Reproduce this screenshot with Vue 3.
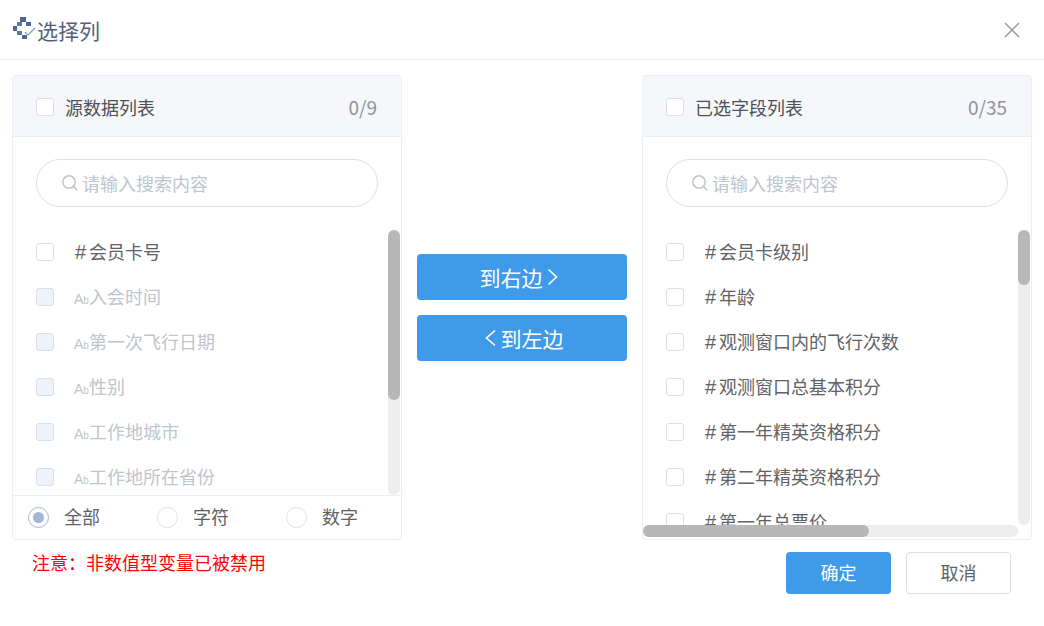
<script setup>
const leftItems = [
  { type: '#', label: '会员卡号', disabled: false },
  { type: 'Ab', label: '入会时间', disabled: true },
  { type: 'Ab', label: '第一次飞行日期', disabled: true },
  { type: 'Ab', label: '性别', disabled: true },
  { type: 'Ab', label: '工作地城市', disabled: true },
  { type: 'Ab', label: '工作地所在省份', disabled: true },
]
const rightItems = ['会员卡级别', '年龄', '观测窗口内的飞行次数', '观测窗口总基本积分', '第一年精英资格积分', '第二年精英资格积分', '第一年总票价']
const radios = ['全部', '字符', '数字']
</script>

<template>
  <div class="dialog">
    <header class="head">
      <div class="title">
        <svg class="logo" width="24" height="23" viewBox="0 0 24 23">
          <g fill="#4f6596">
            <rect x="7" y="0" width="6" height="5" />
            <rect x="13" y="5" width="5" height="4" />
            <rect x="4" y="5" width="5" height="4" fill="#5f76a6" />
            <rect x="0" y="9" width="4" height="5" />
            <rect x="4" y="14" width="5" height="4" fill="#5f76a6" />
            <rect x="9" y="18" width="5" height="4" />
          </g>
          <path d="M12 15l3 3 7-7" fill="none" stroke="#8295b8" stroke-width="1.1" />
        </svg>
        <span>选择列</span>
      </div>
      <svg class="close" width="18" height="18" viewBox="0 0 18 18">
        <path d="M2 2l14 14M16 2L2 16" fill="none" stroke="#8f959e" stroke-width="1.4" />
      </svg>
    </header>

    <main class="body">
      <div class="left-col">
        <section class="panel">
          <div class="panel-head">
            <label class="head-label"><i class="check"></i><span>源数据列表</span></label>
            <span class="count">0/9</span>
          </div>
          <div class="panel-body left-body">
            <div class="search">
              <svg width="18" height="18" viewBox="0 0 18 18"><circle cx="8" cy="8" r="6.2" fill="none" stroke="#c0c4cc" stroke-width="1.5" /><path d="M12.6 12.6l3.6 3.6" stroke="#c0c4cc" stroke-width="1.5" /></svg>
              <span>请输入搜索内容</span>
            </div>
            <ul class="list">
              <li v-for="it in leftItems" :key="it.label" class="row" :class="{ off: it.disabled }">
                <i class="check"></i>
                <span class="label">
                  <span v-if="it.type === '#'" class="hash">#</span>
                  <span v-else class="ab">A<small>b</small></span>{{ it.label }}
                </span>
              </li>
            </ul>
            <div class="vbar"><div class="vthumb left-thumb"></div></div>
          </div>
          <div class="radios">
            <label v-for="(r, i) in radios" :key="r" class="radio">
              <i class="dot" :class="{ on: i === 0 }"></i><span>{{ r }}</span>
            </label>
          </div>
        </section>
        <p class="note">注意：非数值型变量已被禁用</p>
      </div>

      <div class="mid">
        <button class="move">到右边<svg width="16" height="18" viewBox="0 0 16 18"><path d="M1.5 1.500l8 7.500-8 7.500" fill="none" stroke="#fff" stroke-width="1.6" /></svg></button>
        <button class="move"><svg width="16" height="18" viewBox="0 0 16 18"><path d="M14 1.500L5.500 9l8.500 7.500" fill="none" stroke="#fff" stroke-width="1.6" /></svg>到左边</button>
      </div>

      <div class="right-col">
        <section class="panel">
          <div class="panel-head">
            <label class="head-label"><i class="check"></i><span>已选字段列表</span></label>
            <span class="count">0/35</span>
          </div>
          <div class="panel-body right-body">
            <div class="search">
              <svg width="18" height="18" viewBox="0 0 18 18"><circle cx="8" cy="8" r="6.2" fill="none" stroke="#c0c4cc" stroke-width="1.5" /><path d="M12.6 12.6l3.6 3.6" stroke="#c0c4cc" stroke-width="1.5" /></svg>
              <span>请输入搜索内容</span>
            </div>
            <ul class="list">
              <li v-for="it in rightItems" :key="it" class="row">
                <i class="check"></i>
                <span class="label"><span class="hash">#</span>{{ it }}</span>
              </li>
            </ul>
            <div class="vbar right-vbar"><div class="vthumb right-thumb"></div></div>
            <div class="hbar"><div class="hthumb"></div></div>
          </div>
        </section>
        <div class="actions">
          <button class="ok"><span>确定</span></button>
          <button class="cancel"><span>取消</span></button>
        </div>
      </div>
    </main>
  </div>
</template>

<style>
html, body { margin: 0; background: #fff; }
</style>

<style scoped>
.dialog {
  width: 1044px;
  height: 626px;
  overflow: hidden;
  background: #fff;
  font-family: "Noto Sans CJK SC", "Liberation Sans", sans-serif;
  color: #606266;
}
.head {
  height: 59px;
  border-bottom: 1px solid #ebeef5;
  display: flex;
  align-items: center;
  justify-content: space-between;
  padding: 0 23px 0 13px;
}
.title {
  display: flex;
  align-items: center;
  font-size: 21px;
  color: #53607a;
}
.logo { width: 24px; height: 23px; margin-top: -3px; }
.body {
  display: flex;
  padding: 15px 12px 0;
}
.left-col, .right-col { width: 390px; }
.panel {
  box-sizing: border-box;
  width: 390px;
  height: 465px;
  border: 1px solid #ebeef5;
  border-radius: 4px;
  overflow: hidden;
  display: flex;
  flex-direction: column;
}
.panel-head {
  flex: none;
  box-sizing: border-box;
  height: 61px;
  padding: 2px 24px 0 23px;
  background: #f5f7fa;
  border-bottom: 1px solid #ebeef5;
  display: flex;
  align-items: center;
  justify-content: space-between;
}
.head-label {
  display: flex;
  align-items: center;
  font-size: 18px;
  color: #4f5157;
}
.head-label .check { margin-right: 11px; }
.count { font-size: 19px; color: #909399; margin-top: -2px; }
.check {
  flex: none;
  box-sizing: border-box;
  display: block;
  width: 18px;
  height: 18px;
  border: 1px solid #dcdfe6;
  border-radius: 3px;
  background: #fff;
}
.panel-body {
  position: relative;
  overflow: hidden;
  flex: 1;
  min-height: 0;
}
.search {
  box-sizing: border-box;
  height: 48px;
  margin: 22px 23px 0;
  padding-left: 24px;
  border: 1px solid #dcdfe6;
  border-radius: 24px;
  display: flex;
  align-items: center;
  gap: 3px;
  font-size: 18px;
  color: #c0c4cc;
}
.list {
  list-style: none;
  margin: 22px 0 0;
  padding: 0;
}
.row {
  height: 45px;
  display: flex;
  align-items: center;
  padding-left: 23px;
  font-size: 18px;
  color: #606266;
}
.row .label { margin: -2px 0 0 20px; white-space: nowrap; }
.hash {
  display: inline-block;
  width: 15px;
  padding-right: 3px;
  box-sizing: border-box;
  text-align: right;
  font-family: "Liberation Sans", sans-serif;
  font-size: 20px;
}
.ab {
  display: inline-block;
  width: 15px;
  font-family: "Liberation Sans", sans-serif;
  font-size: 14px;
  color: #c0c4cc;
}
.ab small { font-size: 10px; }
.row.off { color: #c0c4cc; }
.row.off .check { background: #edf2fc; }
.vbar {
  position: absolute;
  top: 93px;
  right: 1px;
  bottom: 0;
  width: 12px;
  border-radius: 6px;
  background: #ededed;
}
.right-vbar { bottom: 14px; }
.vthumb {
  width: 12px;
  border-radius: 6px;
  background: #b7b7b7;
}
.left-thumb { height: 170px; }
.right-thumb { height: 55px; }
.hbar {
  position: absolute;
  left: 0;
  right: 13px;
  bottom: 2px;
  height: 12px;
  border-radius: 6px;
  background: #ededed;
}
.hthumb {
  width: 226px;
  height: 12px;
  border-radius: 6px;
  background: #b7b7b7;
}
.radios {
  flex: none;
  box-sizing: border-box;
  height: 44px;
  border-top: 1px solid #ebeef5;
  display: flex;
  align-items: center;
  padding-left: 15px;
}
.radio {
  flex: none;
  width: 129px;
  display: flex;
  align-items: center;
  font-size: 18px;
  color: #606266;
}
.radio span { margin-top: -3px; }
.dot {
  flex: none;
  box-sizing: border-box;
  width: 21px;
  height: 21px;
  border: 1px solid #dcdfe6;
  border-radius: 50%;
  margin-right: 15px;
  background: #fff;
  position: relative;
}
.dot.on { border-color: #a5b4d6; }
.dot.on::after {
  content: "";
  position: absolute;
  left: 4px;
  top: 4px;
  width: 11px;
  height: 11px;
  border-radius: 50%;
  background: #a5b4d6;
}
.note {
  margin: 9px 0 0 20px;
  font-size: 18px;
  line-height: 26px;
  color: #ff0000;
}
.mid {
  width: 240px;
  flex: none;
  display: flex;
  flex-direction: column;
  align-items: center;
  gap: 15px;
  padding-top: 179px;
}
.move {
  width: 210px;
  height: 46px;
  border: 0;
  border-radius: 4px;
  background: #409aea;
  color: #fff;
  font: inherit;
  font-size: 21px;
  display: flex;
  align-items: center;
  justify-content: center;
  gap: 4px;
  padding: 0 2px 0 0;
}
.move + .move { padding: 0; }
.actions {
  display: flex;
  justify-content: flex-end;
  gap: 15px;
  margin: 12px 21px 0 0;
}
.ok, .cancel {
  box-sizing: border-box;
  width: 105px;
  height: 42px;
  border-radius: 4px;
  font: inherit;
  font-size: 18px;
  padding: 0 0 2px;
}
.ok { border: 0; background: #409aea; color: #fff; }
.cancel { border: 1px solid #dcdfe6; background: #fff; color: #606266; }
</style>
